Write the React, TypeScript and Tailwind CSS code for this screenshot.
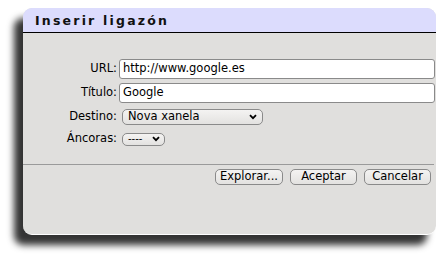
import React from "react";

const font = { fontFamily: '"DejaVu Sans", Verdana, sans-serif' };

function Chevron() {
  return (
    <svg width="8" height="6" viewBox="0 0 8 6" className="ml-auto">
      <path d="M1 1.2 L4 4.2 L7 1.2" fill="none" stroke="#000" strokeWidth="1.8" />
    </svg>
  );
}

export default function App() {
  return (
    <div className="w-[447px] h-[261px] bg-white overflow-hidden pt-[8px] pl-[23px]" style={font}>
      <div className="w-[413px] h-[227px] rounded-[9px] bg-[#e0dfdd] shadow-[-9px_10px_7px_rgba(0,0,0,0.8)] flex flex-col overflow-hidden border-b border-white">
        <div className="h-[25px] bg-[#dcdcfd] border-b border-black flex items-end pl-[12px] pb-[5px] shrink-0">
          <span className="text-[12.5px] font-bold tracking-[2.2px] leading-none text-[#111]">Inserir ligazón</span>
        </div>
        <div className="flex flex-col pt-[26px] text-[11.5px] text-black leading-none">
          <div className="flex items-center h-[20px]">
            <div className="w-[96px] text-right pr-[2px]">URL:</div>
            <div className="w-[316px] h-[20px] bg-white border border-[#8a8a8a] rounded-[3px] flex items-center px-[3px]">http://www.google.es</div>
          </div>
          <div className="flex items-center h-[20px] mt-[4px]">
            <div className="w-[96px] text-right pr-[2px]">Título:</div>
            <div className="w-[316px] h-[20px] bg-white border border-[#8a8a8a] rounded-[3px] flex items-center px-[3px]">Google</div>
          </div>
          <div className="flex items-center h-[17px] mt-[5px]">
            <div className="w-[96px] text-right pr-[2px]">Destino:</div>
            <div className="ml-[3px] w-[141px] h-[16px] bg-gradient-to-b from-[#f4f3f2] to-[#e3e2e0] border border-[#8a8a8a] rounded-[5px] flex items-center pl-[5px] pr-[5px]">
              <span>Nova xanela</span>
              <Chevron />
            </div>
          </div>
          <div className="flex items-center h-[14px] mt-[7px]">
            <div className="w-[96px] text-right pr-[2px]">Áncoras:</div>
            <div className="ml-[3px] w-[43px] h-[13px] bg-gradient-to-b from-[#f4f3f2] to-[#e3e2e0] border border-[#8a8a8a] rounded-[5px] flex items-center pl-[5px] pr-[4px]">
              <span className="text-[10px]">----</span>
              <Chevron />
            </div>
          </div>
          <div className="mt-[18px] h-px bg-[#9a9a9a] w-[411px]"></div>
          <div className="flex justify-end items-center gap-[7px] mt-[4px] pr-[5px]">
            <div className="h-[16px] w-[68px] border border-[#8a8a8a] rounded-[5px] bg-gradient-to-b from-[#f4f3f2] to-[#e3e2e0] flex items-center justify-center">Explorar...</div>
            <div className="h-[16px] w-[67px] border border-[#8a8a8a] rounded-[5px] bg-gradient-to-b from-[#f4f3f2] to-[#e3e2e0] flex items-center justify-center">Aceptar</div>
            <div className="h-[16px] w-[67px] border border-[#8a8a8a] rounded-[5px] bg-gradient-to-b from-[#f4f3f2] to-[#e3e2e0] flex items-center justify-center">Cancelar</div>
          </div>
        </div>
      </div>
    </div>
  );
}
